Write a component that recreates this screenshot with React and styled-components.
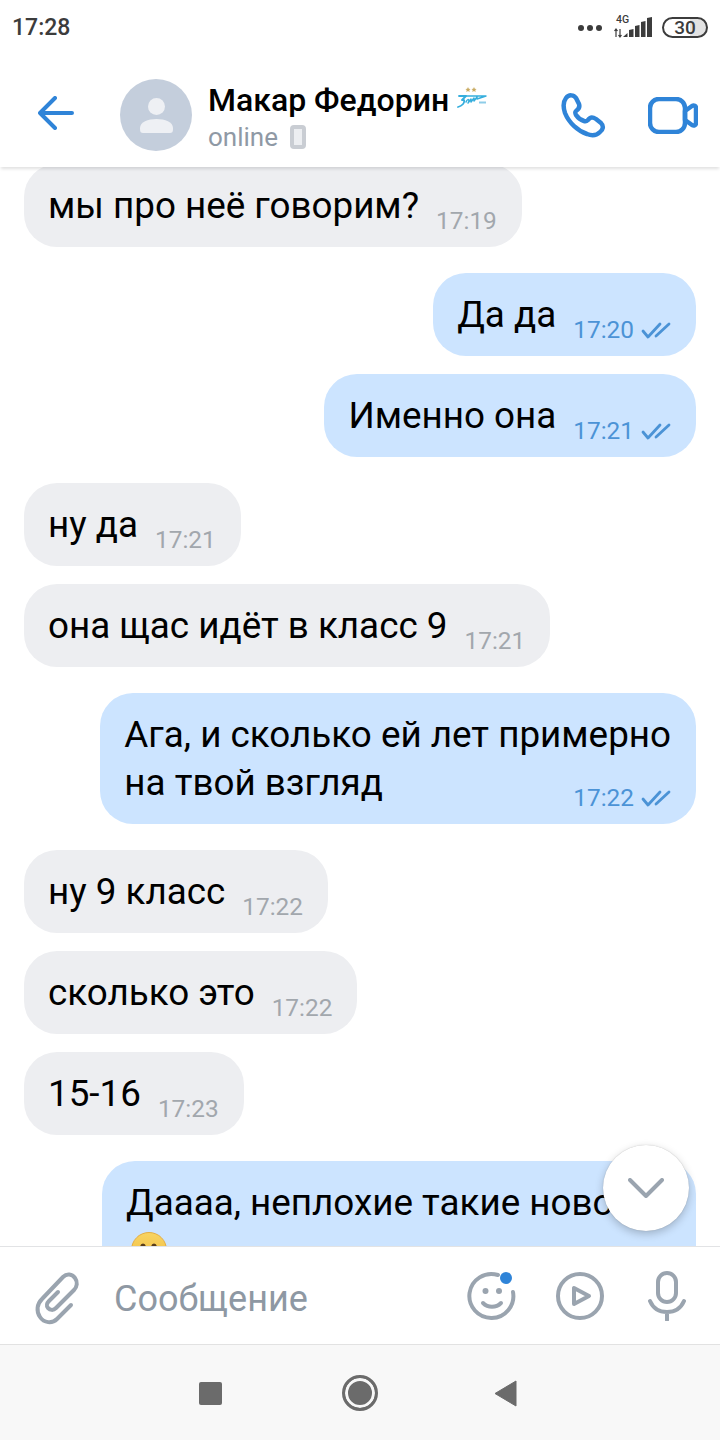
import React from 'react';
import styled, { createGlobalStyle } from 'styled-components';

const GlobalStyle = createGlobalStyle`
  html, body {
    margin: 0;
    padding: 0;
    background: #fff;
  }
  * {
    box-sizing: border-box;
  }
`;

const Phone = styled.div`
  width: 720px;
  height: 1440px;
  display: flex;
  flex-direction: column;
  overflow: hidden;
  font-family: Roboto, 'Noto Sans', sans-serif;
  background: #fff;
`;

const StatusBar = styled.div`
  height: 58px;
  flex: none;
  display: flex;
  align-items: center;
  justify-content: space-between;
  padding: 0 12px 3px 12px;
  color: #3c3c3c;
`;

const Clock = styled.span`
  font-size: 23px;
  font-weight: 500;
`;

const StatusIcons = styled.div`
  display: flex;
  align-items: center;
  gap: 10px;
`;

const Battery = styled.div`
  width: 46px;
  height: 21px;
  border: 2px solid #3c3c3c;
  border-radius: 11px;
  font-size: 19px;
  font-weight: 500;
  line-height: 17px;
  text-align: center;
  background: linear-gradient(90deg, #fff 0, #fff 62%, #e2e2e2 62%, #e2e2e2 100%);
`;

const Header = styled.header`
  height: 109px;
  flex: none;
  display: flex;
  align-items: center;
  padding: 0 22px 0 38px;
  background: #fff;
  box-shadow: 0 3px 3px -1px rgba(0, 0, 0, 0.12);
  position: relative;
  z-index: 2;
`;

const Avatar = styled.div`
  width: 72px;
  height: 72px;
  margin: 5px 16px 0 46px;
  border-radius: 50%;
  background: #c4cedc;
  display: flex;
  align-items: center;
  justify-content: center;
  flex: none;
`;

const Peer = styled.div`
  flex: 1;
  display: flex;
  flex-direction: column;
  margin-top: 7px;
`;

const NameRow = styled.div`
  display: flex;
  align-items: center;
  gap: 7px;
`;

const Name = styled.span`
  font-size: 32px;
  font-weight: 500;
  line-height: 40px;
  color: #000;
`;

const LogoMark = styled.span`
  display: flex;
  margin-top: -5px;
`;

const Presence = styled.div`
  display: flex;
  align-items: center;
  gap: 12px;
  margin-top: 2px;
  font-size: 26px;
  line-height: 30px;
  color: #8f99a5;
`;

const DeviceGlyph = styled.span`
  width: 16px;
  height: 24px;
  border-radius: 4px;
  border: 4px solid #c9cdd3;
  background: #eceef1;
`;

const HeaderActions = styled.div`
  display: flex;
  align-items: center;
  gap: 41px;
  margin-top: 5px;
`;

const ChatArea = styled.main`
  flex: 1;
  min-height: 0;
  position: relative;
  overflow: hidden;
`;

const MessageList = styled.div`
  display: flex;
  flex-direction: column;
  padding: 0 24px;
  margin-top: -3px;
`;

const Bubble = styled.div`
  align-self: ${p => (p.$out ? 'flex-end' : 'flex-start')};
  width: ${p => p.$width || 'auto'};
  margin-top: ${p => (p.$first ? '0' : p.$grouped ? '18px' : '26px')};
  padding: 18px 25px 17px 24px;
  border-radius: 33px;
  background: ${p => (p.$out ? '#cce4ff' : '#edeef1')};
  display: flex;
  flex-direction: ${p => (p.$multi ? 'column' : 'row')};
  align-items: flex-end;
  white-space: nowrap;
`;

const MessageText = styled.div`
  font-size: 36.8px;
  line-height: 48px;
  color: #000;
  align-self: flex-start;
`;

const Meta = styled.div`
  display: flex;
  align-items: center;
  gap: 7px;
  margin-left: 17px;
  margin-top: ${p => (p.$multi ? '-23px' : '0')};
  margin-bottom: -5px;
  font-size: 24.4px;
  line-height: 28px;
  color: ${p => (p.$out ? '#4b93d6' : '#a2a7ad')};
`;

const EmojiLine = styled.span`
  display: block;
  height: 48px;
  padding: 5px 0 0 5px;
`;

const ScrollDown = styled.button`
  position: absolute;
  left: 603px;
  top: 978px;
  width: 86px;
  height: 86px;
  padding: 0;
  border: 0;
  border-radius: 50%;
  background: #fff;
  display: flex;
  align-items: center;
  justify-content: center;
  box-shadow: 0 3px 9px rgba(0, 0, 0, 0.22), 0 0 1px rgba(0, 0, 0, 0.25);
`;

const Composer = styled.div`
  height: 98px;
  flex: none;
  display: flex;
  align-items: center;
  padding: 0 29px 0 31px;
  background: #fff;
  border-top: 1px solid #e2e3e5;
  position: relative;
  z-index: 1;
`;

const Placeholder = styled.span`
  flex: 1;
  margin: 6px 0 0 29px;
  font-size: 36px;
  color: #8e98a3;
`;

const ComposerActions = styled.div`
  display: flex;
  align-items: center;
  gap: 39px;
`;

const NavBar = styled.nav`
  height: 96px;
  flex: none;
  display: flex;
  align-items: center;
  justify-content: center;
  gap: 118px;
  padding: 1px 4px 0 0;
  background: #f8f8f8;
  border-top: 1px solid #e2e2e2;
`;

const NavSquare = styled.span`
  width: 23px;
  height: 23px;
  border-radius: 2px;
  background: #6b6b6b;
`;

const NavHome = styled.span`
  width: 36px;
  height: 36px;
  margin: 0 -2px 0 2px;
  border-radius: 50%;
  background: #6b6b6b;
  border: 3px solid #6b6b6b;
  box-shadow: inset 0 0 0 3px #f8f8f8;
`;

const messages = [
  { text: 'мы про неё говорим?', time: '17:19', first: true },
  { text: 'Да да', time: '17:20', out: true },
  { text: 'Именно она', time: '17:21', out: true, grouped: true },
  { text: 'ну да', time: '17:21' },
  { text: 'она щас идёт в класс 9', time: '17:21', grouped: true },
  { lines: ['Ага, и сколько ей лет примерно', 'на твой взгляд'], time: '17:22', out: true },
  { text: 'ну 9 класс', time: '17:22' },
  { text: 'сколько это', time: '17:22', grouped: true },
  { text: '15-16', time: '17:23', grouped: true },
];

const BLUE = '#2f84d8';
const GREY = '#9aa4af';

function BackIcon() {
  return (
    <svg width="36" height="34" viewBox="0 0 36 34" fill="none" stroke={BLUE} strokeWidth="4" strokeLinecap="round" strokeLinejoin="round">
      <path d="M34 17H2M17 2 2 17l15 15" />
    </svg>
  );
}

function PersonIcon() {
  return (
    <svg width="33" height="35" viewBox="0 0 33 35">
      <circle cx="16.5" cy="8.5" r="8.5" fill="#eef0f4" />
      <path d="M0 30c0-6 8-9 16.5-9S33 24 33 30v1c0 3-1 4-3 4H3c-2 0-3-1-3-4z" fill="#eef0f4" />
    </svg>
  );
}

function ClubLogo() {
  return (
    <svg width="32" height="21" viewBox="0 0 32 21" fill="none">
      <path d="m12 0 .8 1.700 1.800.2-1.300 1.200.3 1.800-1.600-.9-1.600.9.3-1.800-1.300-1.200 1.800-.2zM18 0l.8 1.700 1.800.2-1.300 1.200.3 1.800-1.600-.9-1.600.9.3-1.800-1.300-1.200 1.800-.2z" fill="#c9ab62" />
      <path d="M3 9h7l-4 4h2c1 3-2 6-6 7" stroke="#35aedd" strokeWidth="1.8" strokeLinecap="round" strokeLinejoin="round" />
      <path d="M10 15c1-3 3-3 3-1l-1 2 3-4v3l3-4v3l3-4v2l9-3L10 9" stroke="#35aedd" strokeWidth="1.5" strokeLinecap="round" strokeLinejoin="round" />
      <path d="M23 14.500h7v2h-7z" fill="#8fcde8" />
    </svg>
  );
}

function CallIcon() {
  return (
    <svg width="46" height="45" viewBox="0 0 46 45" fill="none" stroke={BLUE} strokeWidth="4.5" strokeLinejoin="round">
      <path d="M5 5C8 1 13 2 15 5l3 6c1 3 0 5-3 7-1 1-1 2 0 4 2 3 5 5 8 6 2 1 3 0 4-1 2-3 5-3 8-1l5 4c3 3 2 7-1 9-3 3-8 4-13 2C17 38 8 30 4 20 2 14 2 9 5 5z" />
    </svg>
  );
}

function VideoIcon() {
  return (
    <svg width="50" height="37" viewBox="0 0 50 37" fill="none" stroke={BLUE} strokeWidth="4.5" strokeLinejoin="round">
      <rect x="2" y="2" width="35" height="33" rx="9" />
      <path d="m37 14 7-5c2-1 4 0 4 2v15c0 2-2 3-4 2l-7-5z" />
    </svg>
  );
}

function ChecksIcon() {
  return (
    <svg width="30" height="18" viewBox="0 0 30 18" fill="none" stroke="#4b93d6" strokeWidth="2.8" strokeLinecap="round" strokeLinejoin="round">
      <path d="m2 10 5 6L19 3M15 15 28 3" />
    </svg>
  );
}

function FaceEmoji() {
  return (
    <svg width="36" height="36" viewBox="0 0 36 36">
      <defs>
        <linearGradient id="faceFill" x1="0" y1="0" x2="0" y2="1">
          <stop offset="0" stopColor="#f8d463" />
          <stop offset="1" stopColor="#f0b93a" />
        </linearGradient>
      </defs>
      <circle cx="18" cy="18" r="17.5" fill="url(#faceFill)" stroke="#e3ad45" strokeWidth="1" />
      <ellipse cx="12" cy="15" rx="2.8" ry="3.5" fill="#5a3d1a" />
      <ellipse cx="23" cy="15" rx="2.8" ry="3.5" fill="#5a3d1a" />
    </svg>
  );
}

function ChevronIcon() {
  return (
    <svg width="36" height="20" viewBox="0 0 36 20" fill="none" stroke={GREY} strokeWidth="4" strokeLinecap="round" strokeLinejoin="round">
      <path d="m2 2 16 16L34 2" />
    </svg>
  );
}

function ClipIcon() {
  return (
    <svg width="54" height="60" viewBox="0 0 54 60" fill="none" stroke={GREY} strokeWidth="4" strokeLinecap="round" strokeLinejoin="round">
      <path d="M40 39 26 53c-5 5-13 4-17-2-4-6-3-13 2-18l21-22c4-4 9-3 12 1 3 4 2 9-1 12L25 42c-3 3-6 2-8 0-2-2-1-5 1-7l9-9" />
    </svg>
  );
}

function SmileIcon() {
  return (
    <svg width="50" height="50" viewBox="0 0 50 50" fill="none" stroke={GREY} strokeWidth="4" strokeLinecap="round">
      <path d="M31 4A22 22 0 1 0 46 21" />
      <circle cx="18.5" cy="20" r="3" fill={GREY} stroke="none" />
      <circle cx="32" cy="20" r="3" fill={GREY} stroke="none" />
      <path d="M16 32c5 5 13 5 18 0" />
      <circle cx="39" cy="7" r="6" fill={BLUE} stroke="none" />
    </svg>
  );
}

function PlayIcon() {
  return (
    <svg width="48" height="48" viewBox="0 0 48 48" fill="none" stroke={GREY} strokeWidth="4" strokeLinejoin="round">
      <circle cx="24" cy="24" r="22" />
      <path d="M18 16v16l15-8z" />
    </svg>
  );
}

function MicIcon() {
  return (
    <svg width="48" height="50" viewBox="0 0 48 50" fill="none" stroke={GREY} strokeWidth="4" strokeLinecap="round">
      <rect x="15" y="2" width="18" height="29" rx="9" />
      <path d="M7 30c3 7 9 11 17 11s14-4 17-11M24 41v8" />
    </svg>
  );
}

function NetworkIcon() {
  return (
    <svg width="40" height="30" viewBox="0 0 40 30">
      <text x="4" y="9.5" fontFamily="Roboto, sans-serif" fontWeight="500" fontSize="10.5" fill="#3c3c3c">4G</text>
      <path d="M4 16v8M2.500 18 4 16l1.500 2M8 16v8M6.500 22 8 24l1.500-2" stroke="#3c3c3c" strokeWidth="1.2" fill="none" />
      <path d="M11 24l4.500-4v4zM17 24v-7l4.500-1v8zM23 24V13l4.500-1v12zM29 24V9l4.500-1v16zM35 24V5l5-1v20z" fill="#3c3c3c" />
    </svg>
  );
}

function MoreDots() {
  return (
    <svg width="24" height="8" viewBox="0 0 24 8" fill="#3c3c3c">
      <circle cx="3" cy="4" r="3" />
      <circle cx="12" cy="4" r="3" />
      <circle cx="21" cy="4" r="3" />
    </svg>
  );
}

function BackTriangle() {
  return (
    <svg width="23" height="27" viewBox="0 0 23 27" fill="#6b6b6b">
      <path d="M1 13.500 22 1v25z" stroke="#6b6b6b" strokeWidth="1" strokeLinejoin="round" />
    </svg>
  );
}

function MessageMeta({ time, out, multi }) {
  return (
    <Meta $out={out} $multi={multi}>
      <span>{time}</span>
      {out && <ChecksIcon />}
    </Meta>
  );
}

export default function App() {
  return (
    <Phone>
      <GlobalStyle />
      <StatusBar>
        <Clock>17:28</Clock>
        <StatusIcons>
          <MoreDots />
          <NetworkIcon />
          <Battery>30</Battery>
        </StatusIcons>
      </StatusBar>
      <Header>
        <BackIcon />
        <Avatar>
          <PersonIcon />
        </Avatar>
        <Peer>
          <NameRow>
            <Name>Макар Федорин</Name>
            <LogoMark>
              <ClubLogo />
            </LogoMark>
          </NameRow>
          <Presence>
            online
            <DeviceGlyph />
          </Presence>
        </Peer>
        <HeaderActions>
          <CallIcon />
          <VideoIcon />
        </HeaderActions>
      </Header>
      <ChatArea>
        <MessageList>
          {messages.map((m, index) => (
            <Bubble key={index} $out={m.out} $first={m.first} $grouped={m.grouped} $multi={!!m.lines}>
              <MessageText>
                {m.lines ? m.lines.map(line => <div key={line}>{line}</div>) : m.text}
              </MessageText>
              <MessageMeta time={m.time} out={m.out} multi={!!m.lines} />
            </Bubble>
          ))}
          <Bubble $out $multi $width="594px">
            <MessageText>
              Даааа, неплохие такие новости
              <EmojiLine>
                <FaceEmoji />
              </EmojiLine>
            </MessageText>
          </Bubble>
        </MessageList>
        <ScrollDown aria-label="Вниз">
          <ChevronIcon />
        </ScrollDown>
      </ChatArea>
      <Composer>
        <ClipIcon />
        <Placeholder>Сообщение</Placeholder>
        <ComposerActions>
          <SmileIcon />
          <PlayIcon />
          <MicIcon />
        </ComposerActions>
      </Composer>
      <NavBar>
        <NavSquare />
        <NavHome />
        <BackTriangle />
      </NavBar>
    </Phone>
  );
}
